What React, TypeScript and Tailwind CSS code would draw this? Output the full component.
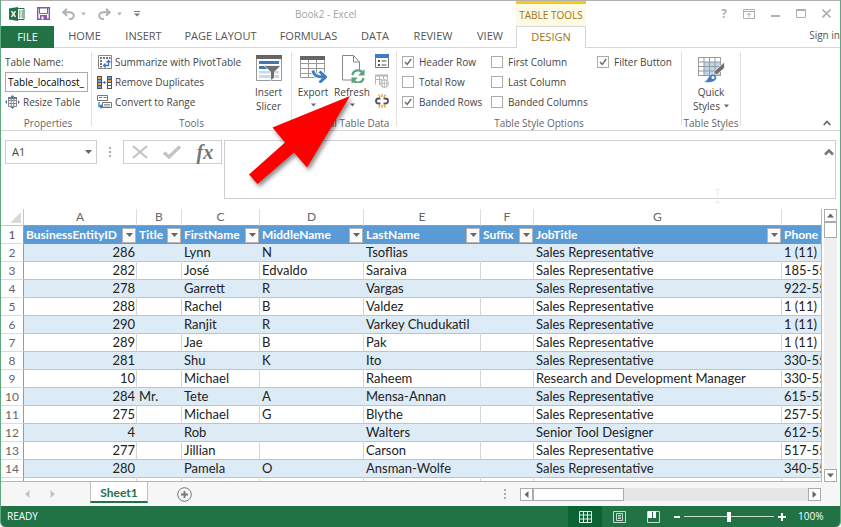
import type { ReactNode } from "react";

const tabs = [
  { name: "HOME", width: "w-[61px]" },
  { name: "INSERT", width: "w-[57px]" },
  { name: "PAGE LAYOUT", width: "w-[97px]" },
  { name: "FORMULAS", width: "w-[79px]" },
  { name: "DATA", width: "w-[54px]" },
  { name: "REVIEW", width: "w-[62px]" },
  { name: "VIEW", width: "w-[52px]" },
];

const styleOptions = [
  { label: "Header Row", checked: true },
  { label: "First Column", checked: false },
  { label: "Filter Button", checked: true },
  { label: "Total Row", checked: false },
  { label: "Last Column", checked: false },
  null,
  { label: "Banded Rows", checked: true },
  { label: "Banded Columns", checked: false },
];

const columns = [
  { letter: "A", name: "BusinessEntityID", width: "w-[113px]" },
  { letter: "B", name: "Title", width: "w-[45px]" },
  { letter: "C", name: "FirstName", width: "w-[78px]" },
  { letter: "D", name: "MiddleName", width: "w-[104px]" },
  { letter: "E", name: "LastName", width: "w-[117px]" },
  { letter: "F", name: "Suffix", width: "w-[53px]" },
  { letter: "G", name: "JobTitle", width: "w-[248px]" },
  { letter: "", name: "Phone", width: "" },
];

const rows = [
  ["286", "", "Lynn", "N", "Tsoflias", "", "Sales Representative", "1 (11) 5"],
  ["282", "", "José", "Edvaldo", "Saraiva", "", "Sales Representative", "185-55"],
  ["278", "", "Garrett", "R", "Vargas", "", "Sales Representative", "922-55"],
  ["288", "", "Rachel", "B", "Valdez", "", "Sales Representative", "1 (11) 5"],
  ["290", "", "Ranjit", "R", "Varkey Chudukatil", "", "Sales Representative", "1 (11) 5"],
  ["289", "", "Jae", "B", "Pak", "", "Sales Representative", "1 (11) 5"],
  ["281", "", "Shu", "K", "Ito", "", "Sales Representative", "330-55"],
  ["10", "", "Michael", "", "Raheem", "", "Research and Development Manager", "330-55"],
  ["284", "Mr.", "Tete", "A", "Mensa-Annan", "", "Sales Representative", "615-55"],
  ["275", "", "Michael", "G", "Blythe", "", "Sales Representative", "257-55"],
  ["4", "", "Rob", "", "Walters", "", "Senior Tool Designer", "612-55"],
  ["277", "", "Jillian", "", "Carson", "", "Sales Representative", "517-55"],
  ["280", "", "Pamela", "O", "Ansman-Wolfe", "", "Sales Representative", "340-55"],
];

const Caret = ({ className = "text-[#666]" }: { className?: string }) => (
  <svg width="7" height="4" viewBox="0 0 7 4" className={className}>
    <path d="M0 0h7L3.500 4z" fill="currentColor" />
  </svg>
);

const Dots = () => (
  <svg width="2" height="10" viewBox="0 0 2 10" fill="#aaa">
    <path d="M0 0h2v2H0zM0 4h2v2H0zM0 8h2v2H0z" />
  </svg>
);

const ExcelIcon = () => (
  <svg width="16" height="14" viewBox="0 0 16 14">
    <path d="M8 1.500h7v11H8z" fill="#fff" stroke="#217346" />
    <path d="M10 4h1.500M12.500 4H14M10 6h1.500M12.500 6H14M10 8h1.500M12.500 8H14M10 10h1.500M12.500 10H14" stroke="#217346" />
    <path d="M0 1.500L9 0v14L0 12.500z" fill="#217346" />
    <path d="M2.500 4.200l4 5.600M6.500 4.200l-4 5.600" stroke="#fff" strokeWidth="1.400" />
  </svg>
);

const SaveIcon = () => (
  <svg width="13" height="13" viewBox="0 0 13 13">
    <path d="M.7.7h11.600v11.600H.7z" fill="#fff" stroke="#8a55b0" strokeWidth="1.400" />
    <path d="M2.500 1v5.500h8V1" fill="none" stroke="#8a55b0" />
    <path d="M3 8h7v4.500H3z" fill="#8a55b0" />
    <path d="M4.500 9.500h2v3h-2z" fill="#fff" />
  </svg>
);

const UndoIcon = ({ className = "" }: { className?: string }) => (
  <svg width="13" height="12" viewBox="0 0 13 12" className={className} fill="none" stroke="#b0b0b0" strokeWidth="1.900">
    <path d="M5 .8L1.300 4.300 5 7.800M1.500 4.300h6c6 0 5.500 7-.5 6.800" />
  </svg>
);

const PivotIcon = () => (
  <svg width="14" height="14" viewBox="0 0 14 14" fill="none">
    <path d="M.5.5h13v13H.5z" fill="#fff" stroke="#888" />
    <path d="M2 2h2v2H2zM5 2h2v2H5zM8 2h2v2H8zM11 2h1.500v2H11zM2 5h2v2H2zM2 8h2v2H2zM2 11h2v1.500H2z" fill="#777" />
    <path d="M6 10.500h4.500V6M8.500 7.500L10.500 5.500l2 2M7.500 8.500l-2 2 2 2" stroke="#3b78b8" strokeWidth="1.300" />
  </svg>
);

const DuplicatesIcon = () => (
  <svg width="15" height="13" viewBox="0 0 15 13">
    <path d="M0 0h5v13H0zM10 0h5v13h-5z" fill="#555" />
    <path d="M1 1h3v2H1zM1 7h3v2H1z" fill="#f0a33f" />
    <path d="M1 4h3v2H1zM1 10h3v2H1zM11 1h3v2h-3z" fill="#6ea4d8" />
    <path d="M11 4h3v2h-3z" fill="#f0a33f" />
    <path d="M11 7h3v2h-3zM11 10h3v2h-3z" fill="#fff" />
    <path d="M5.500 6.500h3M7.200 5l1.500 1.500L7.200 8" fill="none" stroke="#3b78b8" />
  </svg>
);

const RangeIcon = () => (
  <svg width="15" height="14" viewBox="0 0 15 14" fill="#fff">
    <path d="M.5.5h10v5H.5z" stroke="#777" />
    <path d="M2 2.500h3M6.500 2.500h3" stroke="#777" />
    <path d="M5.500 7.500h9v5h-9z" stroke="#777" />
    <path d="M7 9.500h6M7 11h6" stroke="#999" />
    <path d="M2 7v4.500h3M3.500 9.800l2 1.700-2 1.700" fill="none" stroke="#3b78b8" strokeWidth="1.300" />
  </svg>
);

const ResizeIcon = () => (
  <svg width="15" height="14" viewBox="0 0 15 14">
    <path d="M3.500 2.500h8v9h-8zM3.500 5.500h8M3.500 8.500h8M6.200 3v8M8.800 3v8" fill="#fff" stroke="#888" />
    <path d="M3 2h9v2H3z" fill="#777" />
    <path d="M7.500 0l2 2h-4zM7.500 14l2-2h-4zM0 7l2-2v4zM15 7l-2-2v4z" fill="#3b78b8" />
  </svg>
);

const SlicerIcon = () => (
  <svg width="26" height="26" viewBox="0 0 26 26">
    <path d="M.5.5h25v25H.5z" fill="#fff" stroke="#999" />
    <path d="M0 0h26v4H0z" fill="#666" />
    <path d="M3 6h20v3H3zM3 11h12v3H3z" fill="#3b78b8" />
    <path d="M3 16h20v2.500H3zM3 20h20v3H3z" fill="#c3daf0" />
    <path d="M8 10.500h17l-6.500 6.500v6l-4 2.500V17z" fill="#707070" stroke="#fff" strokeWidth=".8" />
  </svg>
);

const ExportIcon = () => (
  <svg width="28" height="28" viewBox="0 0 28 28">
    <path d="M1.500 1.500h24v21h-24zM1.500 8.500h24M1.500 13.500h24M1.500 18.500h24M9.500 4v18M17.500 4v18" fill="#fff" stroke="#999" />
    <path d="M1 1h25v4H1z" fill="#666" />
    <path d="M14 15.500c.5 5 4 6.500 11 6.500M20.500 16.500l6 5.500-6 5.500" fill="none" stroke="#fff" strokeWidth="5" />
    <path d="M14 15.500c.5 5 4 6.500 11 6.500M20.500 16.500l6 5.500-6 5.500" fill="none" stroke="#3f7dbf" strokeWidth="3" />
  </svg>
);

const RefreshIcon = () => (
  <svg width="26" height="28" viewBox="0 0 26 28" fill="none">
    <path d="M3.500.5h11l6 6.500v18h-17z" fill="#fff" stroke="#888" />
    <path d="M14.500.5V7h6" stroke="#888" />
    <circle cx="19" cy="21.500" r="7" fill="#fff" />
    <path d="M13.500 20c1-5.500 8-6 10-2M24.500 23c-1 5.500-8 6-10 2" stroke="#5aa57c" strokeWidth="2.400" />
    <path d="M25.500 14v6.500h-6.500zM12.500 29v-6.500H19z" fill="#5aa57c" />
  </svg>
);

const PropertiesIcon = () => (
  <svg width="14" height="14" viewBox="0 0 14 14">
    <path d="M.5.500h13v13H.5z" fill="#fff" stroke="#777" />
    <path d="M0 0h14v4H0z" fill="#3f7dbf" />
    <path d="M3 6h2v2H3zM3 10h2v2H3z" fill="#555" />
    <path d="M6.500 7h5M6.500 11h5" stroke="#555" />
  </svg>
);

const BrowserIcon = () => (
  <svg width="14" height="14" viewBox="0 0 14 14" fill="none" stroke="#b5b5b5">
    <path d="M.5 10.500V1.500h12v4M.5 5.500H7M4.500 2v9M8.500 2v3" />
    <path d="M0 1.500h13" strokeWidth="2" />
    <circle cx="9.500" cy="9.500" r="4" fill="#fff" />
    <path d="M5.500 9.500h8M9.500 5.500v8M8 6c-1 2.500-1 4.500 0 7M11 6c1 2.500 1 4.500 0 7" strokeWidth=".8" />
  </svg>
);

const UnlinkIcon = () => (
  <svg width="14" height="14" viewBox="0 0 14 14" fill="none">
    <path d="M5.500 4.500h-2a2.500 2.500 0 000 5h2M8.500 4.500h2a2.500 2.500 0 010 5h-2" stroke="#555" strokeWidth="1.800" />
    <path d="M7 0v3M3.500.5L5 3M10.500.5L9 3M7 14v-3M3.500 13.500L5 11M10.500 13.500L9 11" stroke="#e8892b" strokeWidth="1.200" />
  </svg>
);

const QuickStylesIcon = () => (
  <svg width="27" height="26" viewBox="0 0 27 26">
    <path d="M.5.5h22v18H.5z" fill="#fff" />
    <path d="M6 5h17v14H6z" fill="#bcd6ee" />
    <path d="M.5.500h22v18H.5zM.5 5h22M.5 9.500h22M.5 14h22M6 1v18M11.500 1v18M17 1v18" fill="none" stroke="#999" />
    <path d="M26.500 5v6l-8 7-3-3z" fill="#707070" stroke="#fff" strokeWidth=".7" />
    <path d="M6 25c4-.5 4-7 8.500-7.500 3 0 4.500 2.500 3.500 4.500-1.500 3.500-7 3.500-12 3z" fill="#3f7dbf" />
    <circle cx="15" cy="20.500" r="1.500" fill="#fff" />
  </svg>
);

const Group = ({ label, className, children }: { label: string; className: string; children: ReactNode }) => (
  <section className={`flex flex-col ${className}`}>
    <div className="h-[60px]">{children}</div>
    <p className="mt-1 h-[14px] whitespace-nowrap text-center leading-[14px] text-[#666]">{label}</p>
  </section>
);

const Separator = () => <div className="mb-1 w-px bg-[#e1e1e1]" />;

const ToolButton = ({ icon, label }: { icon: ReactNode; label: string }) => (
  <button className="flex h-5 items-center gap-[3px] whitespace-nowrap">
    <span className="flex w-[15px] justify-center">{icon}</span>
    {label}
  </button>
);

const ScrollButton = ({ label, path }: { label: string; path: string }) => (
  <button aria-label={label} className="flex size-[13px] shrink-0 items-center justify-center border border-[#ababab] bg-white">
    <svg width="7" height="7" viewBox="0 0 7 7" fill="#666">
      <path d={path} />
    </svg>
  </button>
);

const TitleBar = () => (
  <header className="flex h-[26px] border-t border-[#b1b1b1]">
    <div className="flex w-[263px] items-center pl-2">
      <ExcelIcon />
      <button aria-label="Save" className="ml-3"><SaveIcon /></button>
      <button aria-label="Undo" className="ml-3"><UndoIcon /></button>
      <button aria-label="Undo list" className="ml-1.5"><Caret className="w-[5px] text-[#b5b5b5]" /></button>
      <button aria-label="Redo" className="ml-3"><UndoIcon className="-scale-x-100" /></button>
      <button aria-label="Redo list" className="ml-1.5"><Caret className="w-[5px] text-[#b5b5b5]" /></button>
      <button aria-label="Customize toolbar" className="ml-3">
        <svg width="6" height="6" viewBox="0 0 6 6" fill="#777"><path d="M0 0h6v1H0zM0 2.500h6L3 5.500z" /></svg>
      </button>
    </div>
    <h1 className="flex w-[252px] items-center pl-[31px] pt-0.5 text-[10px] text-[#a3a3a3]">Book2 - Excel</h1>
    <div className="flex w-[70px] items-center justify-center whitespace-nowrap border-t-[3px] border-[#f6c91c] bg-[#fffae3] text-[10px] text-[#9c7420]">
      TABLE TOOLS
    </div>
    <div className="flex flex-1 items-center justify-end gap-4 pr-[9px] text-[#b0b0b0]">
      <button aria-label="Help" className="text-[12px] font-bold">?</button>
      <button aria-label="Ribbon display options">
        <svg width="12" height="10" viewBox="0 0 12 10" fill="none" stroke="currentColor">
          <path d="M.5.500h11v9H.5zM.5 2.500h11M6 8.500v-4M4 6l2-2 2 2" />
        </svg>
      </button>
      <button aria-label="Minimize">
        <svg width="9" height="10" viewBox="0 0 9 10"><path d="M0 6h9v2H0z" fill="currentColor" /></svg>
      </button>
      <button aria-label="Maximize">
        <svg width="10" height="9" viewBox="0 0 10 9" fill="none" stroke="currentColor"><path d="M.5.500h9v8h-9zM0 1.500h10" /></svg>
      </button>
      <button aria-label="Close">
        <svg width="9" height="9" viewBox="0 0 9 9" stroke="currentColor" strokeWidth="1.600"><path d="M.5.500l8 8M8.500.500l-8 8" /></svg>
      </button>
    </div>
  </header>
);

const TabBar = () => (
  <nav className="flex h-[22px] text-[11px] text-[#555]">
    <button className="w-[53px] bg-[#217346] text-white">FILE</button>
    {tabs.map((tab) => (
      <button key={tab.name} className={`whitespace-nowrap border-b border-[#d6d6d6] ${tab.width}`}>
        {tab.name}
      </button>
    ))}
    <button className="w-[70px] border-x border-t border-[#d6d6d6] text-[#9c7420]">DESIGN</button>
    <div className="flex flex-1 justify-end border-b border-[#d6d6d6]">
      <a href="#" className="whitespace-nowrap text-[10px] leading-[18px]">Sign in</a>
    </div>
  </nav>
);

const Ribbon = () => (
  <div className="relative flex border-b border-[#d6d6d6] pt-1 text-[10px] text-[#444]">
    <Group label="Properties" className="w-[90px] pl-1">
      <label htmlFor="table-name" className="block h-5 leading-5">Table Name:</label>
      <input
        id="table-name"
        defaultValue="Table_localhost_"
        className="block h-5 w-[83px] border border-[#ababab] px-0.5 text-[10px] text-black"
      />
      <ToolButton icon={<ResizeIcon />} label="Resize Table" />
    </Group>
    <Separator />
    <Group label="Tools" className="w-[199px]">
      <div className="flex justify-between pl-[5px]">
        <div>
          <ToolButton icon={<PivotIcon />} label="Summarize with PivotTable" />
          <ToolButton icon={<DuplicatesIcon />} label="Remove Duplicates" />
          <ToolButton icon={<RangeIcon />} label="Convert to Range" />
        </div>
        <button className="flex w-[45px] flex-col items-center pt-[3px] leading-[14px]">
          <SlicerIcon />
          <span className="mt-1">Insert</span>
          <span>Slicer</span>
        </button>
      </div>
    </Group>
    <Separator />
    <Group label="External Table Data" className="w-[104px]">
      <div className="flex">
        <button className="flex w-[42px] flex-col items-center pt-[3px] leading-[14px]">
          <ExportIcon />
          <span className="mt-0.5">Export</span>
          <Caret className="mt-1 w-[5px] text-[#666]" />
        </button>
        <button className="flex w-[36px] flex-col items-center pt-[3px] leading-[14px]">
          <RefreshIcon />
          <span className="mt-0.5">Refresh</span>
          <Caret className="mt-1 w-[5px] text-[#666]" />
        </button>
        <div className="flex flex-col gap-1.5 pl-[5px] pt-0.5">
          <button aria-label="Table properties"><PropertiesIcon /></button>
          <button aria-label="Open in browser"><BrowserIcon /></button>
          <button aria-label="Unlink"><UnlinkIcon /></button>
        </div>
      </div>
    </Group>
    <Separator />
    <Group label="Table Style Options" className="w-[284px]">
      <div className="grid grid-cols-[89px_106px_1fr] pl-[5px]">
        {styleOptions.map((option, idx) =>
          option ? (
            <label key={idx} className="flex h-5 items-center gap-[5px] whitespace-nowrap">
              <span className="grid size-[12px]">
                <input
                  type="checkbox"
                  defaultChecked={option.checked}
                  className="peer col-start-1 row-start-1 size-[12px] appearance-none border border-[#ababab] bg-white"
                />
                <svg viewBox="0 0 12 12" className="pointer-events-none invisible col-start-1 row-start-1 size-[12px] peer-checked:visible">
                  <path d="M3 6l2.200 2.500L9.200 3" fill="none" stroke="#666" strokeWidth="1.300" />
                </svg>
              </span>
              {option.label}
            </label>
          ) : (
            <span key={idx} />
          )
        )}
      </div>
    </Group>
    <Separator />
    <Group label="Table Styles" className="w-[58px]">
      <button className="flex w-full flex-col items-center pt-[5px] leading-[14px]">
        <QuickStylesIcon />
        <span className="mt-0.5">Quick</span>
        <span className="flex items-center gap-1">
          Styles <Caret className="w-[5px] text-[#666]" />
        </span>
      </button>
    </Group>
    <Separator />
    <div className="flex flex-1 items-end justify-end pb-1 pr-[9px]">
      <button aria-label="Collapse the ribbon">
        <svg width="8" height="6" viewBox="0 0 8 6" fill="none" stroke="#666" strokeWidth="1.700"><path d="M.7 5L4 1.500 7.300 5" /></svg>
      </button>
    </div>
    {/* red pointer aimed at the Refresh button */}
    <svg width="116" height="100" viewBox="0 0 116 100" className="pointer-events-none absolute left-[243px] top-[44px] z-10 drop-shadow-[2px_3px_2px_rgba(0,0,0,0.45)]">
      <path d="M106 4L28.500 35.500 41 50.500 5 82.500 13.500 92 50 60.500 63 75.500z" fill="#f00" />
    </svg>
  </div>
);

const FormulaBar = () => (
  <div className="flex items-start bg-white pb-[10px] pl-1 pr-1 pt-[9px] text-[11px] text-[#444]">
    <div className="flex h-6 w-[92px] items-center border border-[#cfcfcf] pr-1">
      <input aria-label="Name Box" defaultValue="A1" className="w-full min-w-0 pl-1.5" />
      <button aria-label="Name list"><Caret /></button>
    </div>
    <div className="flex h-6 w-[26px] items-center justify-center"><Dots /></div>
    <div className="flex h-6 w-[99px] items-center justify-around border border-[#cfcfcf]">
      <button aria-label="Cancel">
        <svg width="16" height="14" viewBox="0 0 16 14" stroke="#c4c4c4" strokeWidth="2.200"><path d="M1 1l14 12M15 1L1 13" /></svg>
      </button>
      <button aria-label="Enter">
        <svg width="18" height="14" viewBox="0 0 18 14" fill="none" stroke="#c4c4c4" strokeWidth="3.400"><path d="M1 7.500L6 12 17 1.500" /></svg>
      </button>
      <button aria-label="Insert Function" className="font-['Liberation_Serif',serif] text-[20px] font-bold italic leading-5 text-[#777]">fx</button>
    </div>
    <div className="relative ml-0.5 flex flex-1">
      <textarea aria-label="Formula Bar" className="h-[59px] w-full resize-none border border-[#cfcfcf] bg-white" />
      <button aria-label="Collapse formula bar" className="absolute right-0.5 top-2">
        <svg width="10" height="8" viewBox="0 0 10 8" fill="none" stroke="#777" strokeWidth="2.600"><path d="M1 6.500l4-4 4 4" /></svg>
      </button>
      {/* faint text cursor */}
      <svg width="7" height="14" viewBox="0 0 7 14" fill="none" stroke="#ececec" className="pointer-events-none absolute -bottom-1 right-[115px]">
        <path d="M.5.500h6M3.500 1v12M.5 13.500h6" />
      </svg>
    </div>
  </div>
);

const Sheet = () => (
  <div className="flex">
    <div className="min-w-0 flex-1 overflow-hidden border-b border-r border-[#b5b5b5]">
      <table className="w-full table-fixed border-separate border-spacing-0 font-['Lato',sans-serif] text-[13px] text-[#222]">
        <colgroup>
          <col className="w-[23px]" />
          {columns.map((col) => (
            <col key={col.name} className={col.width} />
          ))}
        </colgroup>
        <thead>
          <tr className="h-[17px] text-[12px] text-[#666]">
            <th className="border-b border-r border-[#c6c6c6] p-0">
              <svg width="11" height="11" viewBox="0 0 11 11" className="ml-auto mr-0.5"><path d="M11 0v11H0z" fill="#d9d9d9" /></svg>
            </th>
            {columns.map((col) => (
              <th key={col.name} className="border-b border-r border-b-[#9a9a9a] border-r-[#dcdcdc] p-0 font-normal leading-4 last:border-r-0">
                {col.letter}
              </th>
            ))}
          </tr>
        </thead>
        <tbody>
          <tr className="h-[18px]">
            <th className="border-b border-r border-b-[#dcdcdc] border-r-[#9a9a9a] p-0 text-[12px] font-normal leading-[17px] text-[#555]">1</th>
            {columns.map((col) => (
              <th key={col.name} className="bg-[#5b9bd5] p-0 pl-0.5 pr-px text-left text-[12px] leading-[18px] text-white">
                <div className="flex items-center justify-between overflow-hidden whitespace-nowrap">
                  {col.name}
                  {col.letter && (
                    <button aria-label={`Filter ${col.name}`} className="flex h-[15px] w-[14px] shrink-0 items-center justify-center border border-[#b5b5b5] bg-[#fafafa]">
                      <Caret />
                    </button>
                  )}
                </div>
              </th>
            ))}
          </tr>
          {rows.map((row, idx) => {
            const banded = idx % 2 === 0;
            return (
              <tr key={idx} className={banded ? "h-[18px] bg-[#ddebf7]" : "h-[18px] bg-white"}>
                <th className="border-b border-r border-b-[#dcdcdc] border-r-[#9a9a9a] bg-white p-0 text-[12px] font-normal leading-[17px] text-[#666]">
                  {idx + 2}
                </th>
                {row.map((cell, i) => (
                  <td
                    key={i}
                    className={`overflow-hidden whitespace-nowrap border-b border-r border-b-[#a6c9ea] p-0 pl-0.5 leading-[17px] last:border-r-0 ${
                      banded ? "border-r-[#ddebf7]" : "border-r-[#d6d6d6]"
                    } ${i === 0 ? "pr-px text-right" : ""}`}
                  >
                    {cell}
                  </td>
                ))}
              </tr>
            );
          })}
          <tr className="h-[3px]">
            <th className="border-r border-[#9a9a9a] p-0" />
            {columns.map((col) => (
              <td key={col.name} className="border-r border-[#d6d6d6] p-0 last:border-r-0" />
            ))}
          </tr>
        </tbody>
      </table>
    </div>
    <div className="ml-0.5 mr-[3px] flex w-[13px] flex-col bg-[#f0f0f0]">
      <ScrollButton label="Scroll up" path="M0 5.500h7L3.500 1.500z" />
      <div className="h-4 border border-[#ababab] bg-white" />
      <div className="flex-1" />
      <ScrollButton label="Scroll down" path="M0 1.500h7L3.500 5.500z" />
    </div>
  </div>
);

const SheetTabs = () => (
  <div className="flex h-6 items-center bg-[#f6f6f6]">
    <div className="flex w-[89px] gap-5 pl-6">
      <button aria-label="Previous sheet">
        <svg width="5" height="8" viewBox="0 0 5 8"><path d="M4.500 0v8L0 4z" fill="#c4c4c4" /></svg>
      </button>
      <button aria-label="Next sheet">
        <svg width="5" height="8" viewBox="0 0 5 8"><path d="M.5 0v8L5 4z" fill="#c4c4c4" /></svg>
      </button>
    </div>
    <button className="h-[21px] w-[58px] self-start border-x border-b-2 border-x-[#c0c0c0] border-b-[#217346] bg-white pt-0.5 font-['Lato',sans-serif] text-[12px] font-bold text-[#217346]">
      Sheet1
    </button>
    <button aria-label="New sheet" className="ml-[29px]">
      <svg width="15" height="15" viewBox="0 0 15 15" fill="none" stroke="#777">
        <circle cx="7.500" cy="7.500" r="6.800" />
        <path d="M7.500 4v7M4 7.500h7" strokeWidth="1.800" />
      </svg>
    </button>
    <div className="flex-1" />
    <Dots />
    <div className="ml-[14px] mr-[19px] flex w-[301px] bg-[#e6e6e6]">
      <ScrollButton label="Scroll left" path="M5.500 0v7L1.500 3.500z" />
      <div className="w-[91px] border border-[#ababab] bg-white" />
      <div className="flex-1" />
      <ScrollButton label="Scroll right" path="M1.500 0v7L5.500 3.500z" />
    </div>
  </div>
);

const StatusBar = () => (
  <footer className="flex h-[21px] items-center bg-[#217346] text-[10px] text-white">
    <span className="flex-1 pl-1.5">READY</span>
    <button aria-label="Normal view" className="flex h-full w-[34px] items-center justify-center bg-[#0a6332]">
      <svg width="13" height="12" viewBox="0 0 13 12" fill="none" stroke="#e6f0ea"><path d="M.5.500h12v11H.5zM4.500 0v12M8.500 0v12M0 4h13M0 8h13" /></svg>
    </button>
    <button aria-label="Page layout view" className="flex h-full w-[34px] items-center justify-center">
      <svg width="13" height="12" viewBox="0 0 13 12" fill="none" stroke="#c5dccf"><path d="M.5.500h12v11H.5zM3.500 2.500h6v7h-6zM5 4.500h3M5 6h3M5 7.500h3" /></svg>
    </button>
    <button aria-label="Page break view" className="flex h-full w-[34px] items-center justify-center">
      <svg width="13" height="12" viewBox="0 0 13 12">
        <path d="M.5.500h12v11H.5z" fill="none" stroke="#c5dccf" />
        <path d="M1 0h4v7H1zM6 0h3v7H6z" fill="#fff" />
      </svg>
    </button>
    <button aria-label="Zoom out" className="ml-1">
      <svg width="6" height="8" viewBox="0 0 6 8"><path d="M0 3h6v2H0z" fill="#fff" /></svg>
    </button>
    <input
      type="range"
      aria-label="Zoom"
      defaultValue="50"
      className="mx-1 h-[10px] w-[90px] appearance-none bg-[linear-gradient(#c5dccf,#c5dccf)] bg-[length:100%_1px] bg-center bg-no-repeat [&::-webkit-slider-thumb]:h-[10px] [&::-webkit-slider-thumb]:w-1 [&::-webkit-slider-thumb]:appearance-none [&::-webkit-slider-thumb]:bg-white"
    />
    <button aria-label="Zoom in">
      <svg width="8" height="8" viewBox="0 0 8 8"><path d="M0 3h8v2H0zM3 0h2v8H3z" fill="#fff" /></svg>
    </button>
    <span className="w-[54px] pl-3">100%</span>
  </footer>
);

export default function App() {
  return (
    <div className="overflow-hidden rounded-b-[5px] border-x border-[#5fa882] bg-white font-['Open_Sans','Noto_Sans',sans-serif]">
      <TitleBar />
      <TabBar />
      <Ribbon />
      <FormulaBar />
      <Sheet />
      <SheetTabs />
      <StatusBar />
    </div>
  );
}
